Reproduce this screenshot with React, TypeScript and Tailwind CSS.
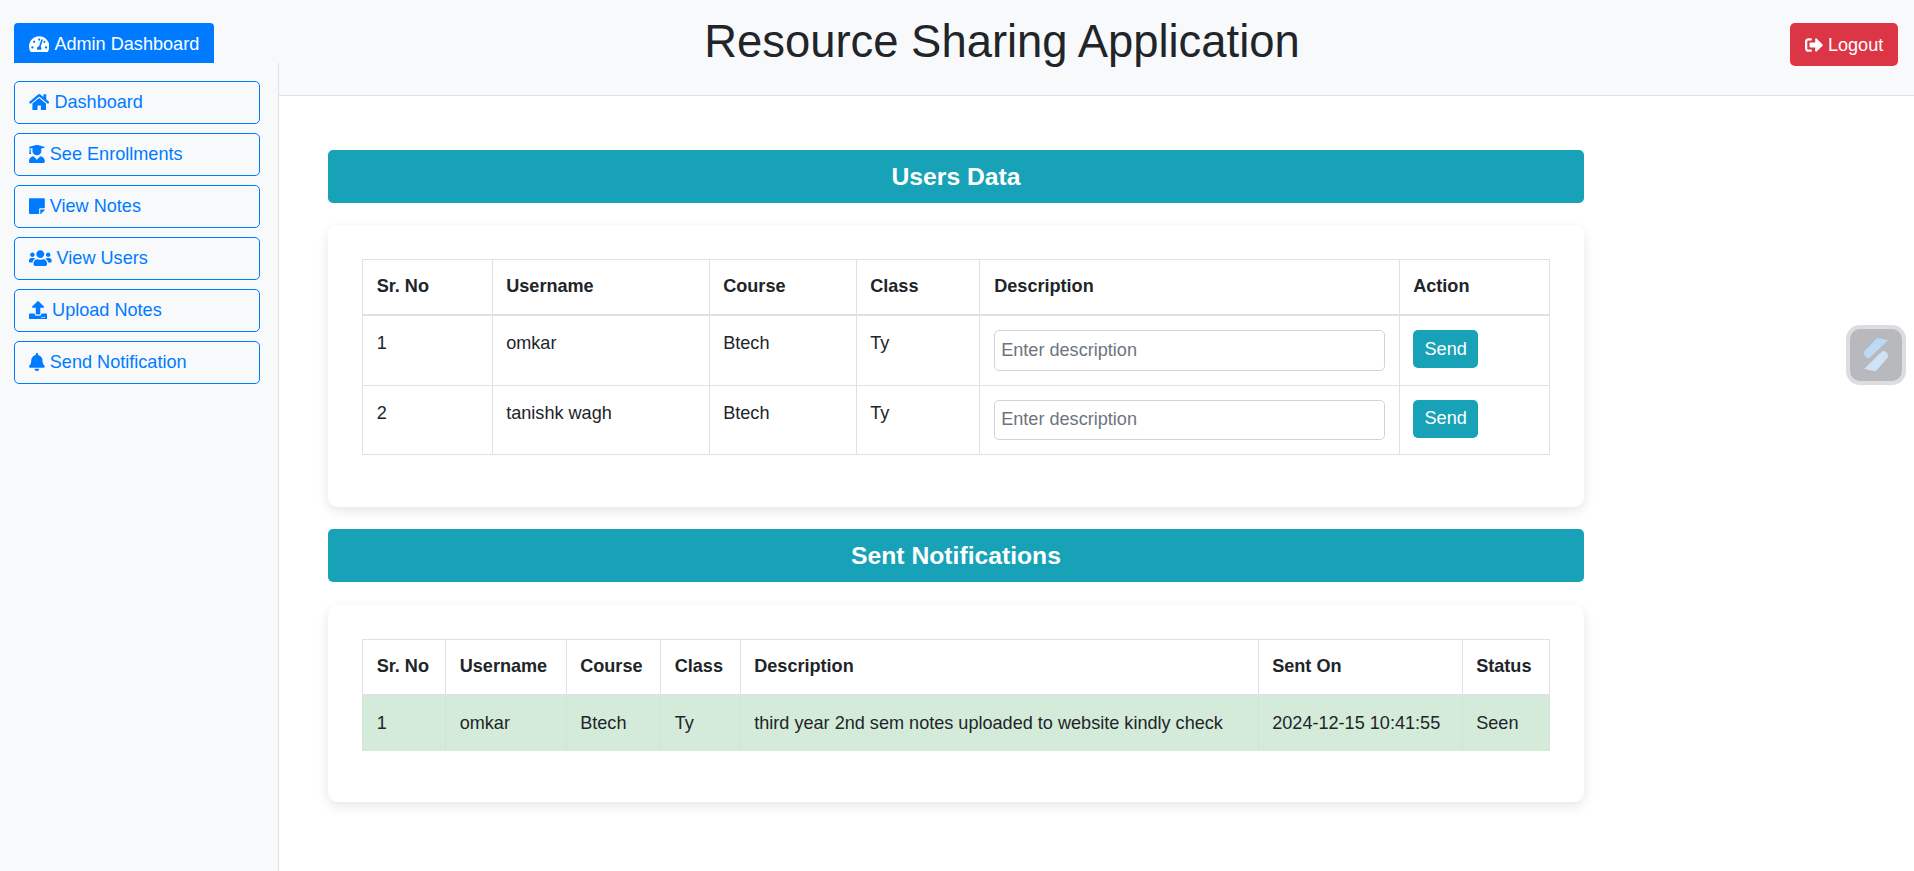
import React from "react";
import {
  FaBell,
  FaHome,
  FaSignOutAlt,
  FaStickyNote,
  FaTachometerAlt,
  FaUpload,
  FaUserGraduate,
  FaUsers,
} from "react-icons/fa";

const navItems = [
  { label: "Dashboard", icon: FaHome, iconClass: "w-[20.4px]" },
  { label: "See Enrollments", icon: FaUserGraduate, iconClass: "w-[15.8px]" },
  { label: "View Notes", icon: FaStickyNote, iconClass: "w-[15.8px]" },
  { label: "View Users", icon: FaUsers, iconClass: "w-[22.6px]" },
  { label: "Upload Notes", icon: FaUpload, iconClass: "w-[18.1px]" },
  { label: "Send Notification", icon: FaBell, iconClass: "w-[15.8px]" },
];

const users = [
  { id: 1, name: "omkar", course: "Btech", cls: "Ty" },
  { id: 2, name: "tanishk wagh", course: "Btech", cls: "Ty" },
];

const thClass = "border border-[#dee2e6] border-b-[2px] px-[13.7px] py-[13.9px] text-left align-top font-bold";
const tdClass = "border border-[#dee2e6] px-[13.7px] py-[13.9px] align-top font-normal";
const tdSuccess = "border-x border-[#cfe6d5] px-[13.7px] py-[13.9px] align-top font-normal";

const Banner = ({ title }: { title: string }) => (
  <div className="flex h-[52.5px] items-center justify-center rounded-[5px] bg-[#17a2b8] text-[24.7px] font-bold text-white">
    {title}
  </div>
);

const App = () => {
  return (
    <div className="flex min-h-screen bg-white font-['Liberation_Sans',Arial,sans-serif] text-[18.1px] leading-[27.15px] text-[#212529]">
      {/* Sidebar */}
      <aside className="flex w-[279px] shrink-0 flex-col bg-[#f8f9fa]">
        <div className="pl-[14px] pt-[23px]">
          <div className="flex h-[40px] w-[200px] items-center gap-[5px] rounded-t-[4px] bg-[#007bff] pl-[15px] pt-[3px] text-white">
            <FaTachometerAlt className="w-[20.4px]" />
            Admin Dashboard
          </div>
        </div>
        <nav className="flex flex-1 flex-col gap-[9.4px] border-r border-[#dee2e6] px-[14px] pt-[18px]">
          {navItems.map((item) => (
            <a
              key={item.label}
              href="#"
              className="flex h-[42.6px] w-[246px] items-center gap-[5px] rounded-[5px] border border-[#007bff] pl-[14px] text-[#007bff]"
            >
              <item.icon className={item.iconClass} />
              {item.label}
            </a>
          ))}
        </nav>
      </aside>

      <div className="flex min-w-0 flex-1 flex-col">
        {/* Header */}
        <header className="flex h-[96px] items-start border-b border-[#dee2e6] bg-[#f8f9fa] pr-[16px]">
          <h1 className="flex-1 pr-[65px] pt-[15px] text-center text-[45.4px] font-normal leading-[54px]">
            Resource Sharing Application
          </h1>
          <button className="mt-[23px] flex h-[43px] w-[108px] items-center justify-center gap-[5px] rounded-[5px] bg-[#dc3545] pt-[2px] text-white">
            <FaSignOutAlt className="w-[18.1px]" />
            Logout
          </button>
        </header>

        {/* Content */}
        <main className="ml-[49px] flex w-[1256px] flex-col pt-[54px]">
          <Banner title="Users Data" />
          <section className="mt-[22px] rounded-[10px] bg-white px-[34px] pb-[52px] pt-[34px] shadow-[0_4px_12px_rgba(0,0,0,0.1)]">
            <table className="w-full table-fixed border-collapse">
              <thead>
                <tr>
                  <th className={`${thClass} w-[129.5px]`}>Sr. No</th>
                  <th className={`${thClass} w-[217px]`}>Username</th>
                  <th className={`${thClass} w-[147px]`}>Course</th>
                  <th className={`${thClass} w-[123px]`}>Class</th>
                  <th className={`${thClass} w-[420px] pl-[14.7px]`}>Description</th>
                  <th className={thClass}>Action</th>
                </tr>
              </thead>
              <tbody>
                {users.map((user) => (
                  <tr key={user.id}>
                    <td className={tdClass}>{user.id}</td>
                    <td className={tdClass}>{user.name}</td>
                    <td className={tdClass}>{user.course}</td>
                    <td className={tdClass}>{user.cls}</td>
                    <td className={`${tdClass} pl-[14.7px]`}>
                      <input
                        placeholder="Enter description"
                        className="block h-[40.5px] w-full rounded-[5px] border border-[#ced4da] bg-white px-[6px] placeholder:text-[#6c757d]"
                      />
                    </td>
                    <td className={tdClass}>
                      <button className="block h-[38px] w-[65px] rounded-[5px] bg-[#17a2b8] text-white">Send</button>
                    </td>
                  </tr>
                ))}
              </tbody>
            </table>
          </section>

          <div className="mt-[22px]">
            <Banner title="Sent Notifications" />
          </div>
          <section className="mt-[23px] rounded-[10px] bg-white px-[34px] pb-[51px] pt-[34px] shadow-[0_4px_12px_rgba(0,0,0,0.1)]">
            <table className="w-full table-fixed border-collapse">
              <thead>
                <tr>
                  <th className={`${thClass} w-[83px]`}>Sr. No</th>
                  <th className={`${thClass} w-[120.5px]`}>Username</th>
                  <th className={`${thClass} w-[94.5px]`}>Course</th>
                  <th className={`${thClass} w-[79.5px]`}>Class</th>
                  <th className={`${thClass} w-[518px]`}>Description</th>
                  <th className={`${thClass} w-[204px]`}>Sent On</th>
                  <th className={thClass}>Status</th>
                </tr>
              </thead>
              <tbody>
                <tr className="bg-[#d4ebda]">
                  <td className={tdSuccess}>1</td>
                  <td className={tdSuccess}>omkar</td>
                  <td className={tdSuccess}>Btech</td>
                  <td className={tdSuccess}>Ty</td>
                  <td className={tdSuccess}>third year 2nd sem notes uploaded to website kindly check</td>
                  <td className={tdSuccess}>2024-12-15 10:41:55</td>
                  <td className={tdSuccess}>Seen</td>
                </tr>
              </tbody>
            </table>
          </section>
        </main>
      </div>

      {/* Floating extension button */}
      <div className="fixed left-[1846px] top-[325px] flex h-[60px] w-[60px] items-center justify-center rounded-[14px] border-[4px] border-[#dcdde0] bg-[#b8b9bd]">
        <svg width="24" height="34" viewBox="0 0 24 34">
          <path d="M13.3 0 L24 2.3 L6 19.5 Q3 21 1.2 18 Q-1 15 1 12.5 Z" fill="#bddaf5" />
          <path d="M18.3 13.3 Q21 12 23 15 Q25 18 23 20.5 L11.7 33.3 L0 31 Z" fill="#cfe3f7" />
        </svg>
      </div>
    </div>
  );
};

export default App;
